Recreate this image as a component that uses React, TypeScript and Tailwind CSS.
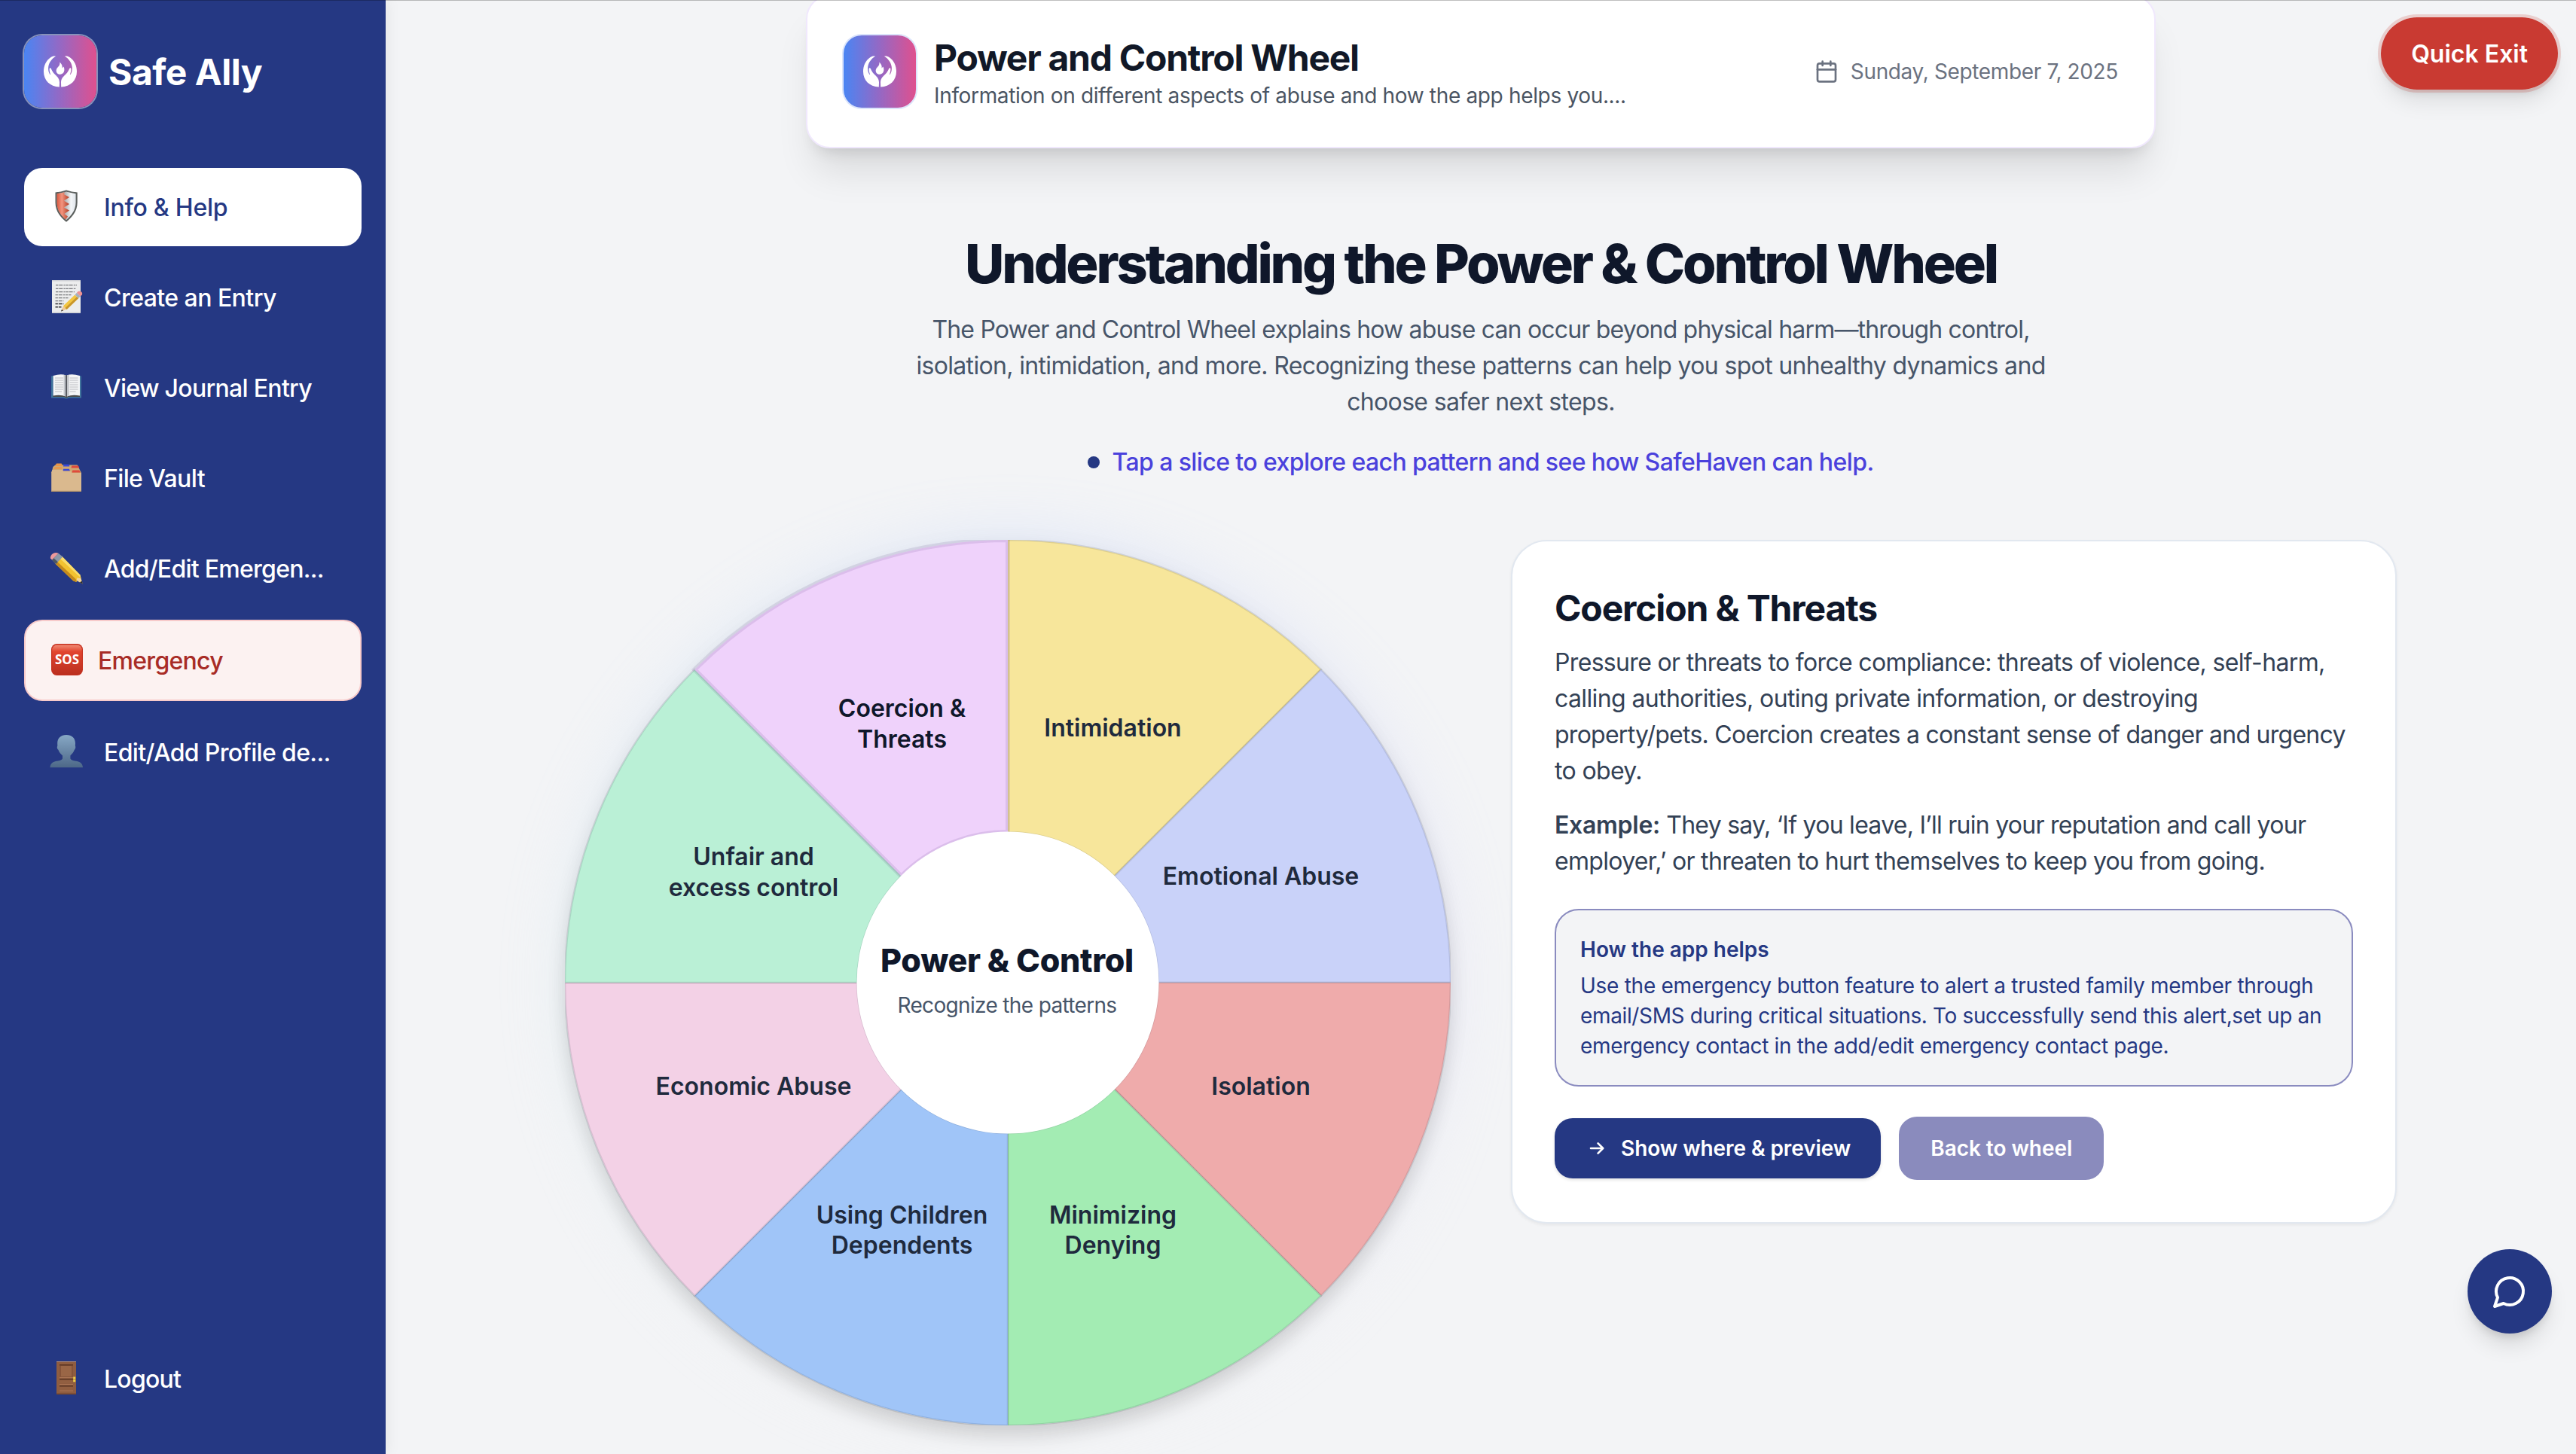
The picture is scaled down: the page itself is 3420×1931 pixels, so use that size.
import React from "react";

/* ---------- Icons ---------- */

const HAND =
  "M18 3.8C16 2.9 13.6 3.5 11.2 5.2C5.2 9.4 2 16.2 2 24C2 35.6 10.2 44 22.8 44.5L23 38.4C23 33 19.2 30.2 16.6 27.6C14.2 25.2 12.8 22.2 11.9 20.2C11.1 18.6 9.5 19 9.6 21C9.7 24 10.3 26 11.2 27.8L10.4 28C8.4 25.2 7.8 21.2 8.2 18C9 11.8 13 6.8 18 3.8Z";

function HandsMark() {
  return (
    <svg viewBox="0 0 48 48" className="size-12" fill="#fff">
      <path d={HAND} />
      <path d={HAND} transform="translate(48 0) scale(-1 1)" />
      <path d="M23.4 11.6C25.6 14 27.2 16 26.6 19.4L28.4 17.6C30.6 21.6 29.2 27.7 24.2 27.7C19.6 27.7 17.6 23.8 19.2 20.4C20.4 18.2 24 16.6 23.4 11.6Z" />
    </svg>
  );
}

function LogoTile({ ring }: { ring: string }) {
  return (
    <div
      className={`flex size-24 shrink-0 items-center justify-center rounded-[24px] bg-[linear-gradient(90deg,#4a85f3_0%,#9568c4_50%,#df508e_100%)] ring-2 ${ring}`}
    >
      <HandsMark />
    </div>
  );
}

function ShieldIcon() {
  return (
    <svg viewBox="0 0 48 48" className="size-12">
      <defs>
        <linearGradient id="shR" x1="0" x2="1">
          <stop offset="0" stopColor="#d9583f" />
          <stop offset=".4" stopColor="#f2957f" />
          <stop offset="1" stopColor="#b23a22" />
        </linearGradient>
        <linearGradient id="shW" x1="0" x2="1">
          <stop offset="0" stopColor="#b9bcbd" />
          <stop offset=".45" stopColor="#b4b6b7" />
          <stop offset=".75" stopColor="#f4f6f8" />
          <stop offset="1" stopColor="#dfe4ea" />
        </linearGradient>
      </defs>
      <path d="M9.5 4.5Q17 3.6 24 1.4Q31 3.6 38.7 4.5V18C38.7 30 31 38 24 43.8C17 38 9.5 30 9.5 18Z" fill="#5b5f5d" />
      <path d="M11.6 6.3Q18 5.4 24 3.6Q30 5.4 36.6 6.3V18C36.6 28.6 30 36 24 41.2C18 36 11.6 28.6 11.6 18Z" fill="url(#shW)" />
      <path d="M11.6 6.3Q18 5.4 22 4.2L21 7L28 11L21 15.5L28 20L21 24.5L28 28.5L21.5 33L26 36.5L23 40.4C17.5 35.6 11.6 28.6 11.6 18Z" fill="url(#shR)" />
    </svg>
  );
}

function MemoIcon() {
  return (
    <svg viewBox="0 0 48 48" className="size-12">
      <rect x="5" y="1.2" width="38" height="43.6" fill="#eceded" />
      <path d="M5 1.2h38v1.2H5zM5 43.6h38v1.2H5z" fill="#cfd1d3" />
      <g stroke="#77797c" strokeWidth="1.1" fill="none" strokeDasharray="3.4 .9 5 1.2 2 .8">
        <path d="M10 7.6h28M10 12.4h27M10 16.6h25M9.5 20.6h21M9.5 24.6h18M9.5 28.6h11" />
        <path d="M9.5 32.6h11M9.5 36.8h8" stroke="#2d2e30" strokeWidth="1.5" />
      </g>
      <path d="M17 42.6L20 35.2L24.6 39.8Z" fill="#edc897" />
      <path d="M17 42.6L18 40L20 41.6Z" fill="#333" />
      <path d="M20 35.2L35.4 20.4L40.2 25L24.6 40Z" fill="#f3c641" />
      <path d="M22.6 38L38 23.2L40.2 25L24.6 40Z" fill="#c8952a" />
      <path d="M35.4 20.4L38 17.8L42.8 22.4L40.2 25Z" fill="#a7b2bd" />
      <path d="M38 17.8C39.8 13.8 46.8 16 44.8 20.4L42.8 22.4Z" fill="#ee9292" />
    </svg>
  );
}

function BookIcon() {
  return (
    <svg viewBox="0 0 48 48" className="size-12">
      <path d="M4 8.6L6.6 8V34.6H42V8L44 8.6V37.6H27.6Q24 39.4 20.4 37.6H4Z" fill="#3f739b" />
      <path d="M6.4 34H42V36H27L24 37.4L21 36H6.4Z" fill="#4b4c4a" />
      <path d="M6.6 8Q17 4.8 23.4 7.4V35.4Q16 32.8 6.6 34.6Z" fill="#f4f5f6" />
      <path d="M42 8Q31.4 4.8 24.8 7.4V35.4Q32.4 32.8 42 34.6Z" fill="#f4f5f6" />
      <path d="M20.6 6.8L23.4 7.4V35.4L20.6 34.4Z" fill="#c3c6ca" />
      <path d="M27.6 6.8L24.8 7.4V35.4L27.6 34.4Z" fill="#c3c6ca" />
      <path d="M23.2 7.2h1.8V35.6h-1.8z" fill="#55585c" />
      <g stroke="#b4b7bb" strokeWidth=".9">
        <path d="M9 11h11M9 14h11M9 17h11M9 20h11M9 23h11M9 26h11M9 29h9M28.6 11h11M28.6 14h11M28.6 17h11M28.6 20h11M28.6 23h11M28.6 26h11M28.6 29h8" />
      </g>
    </svg>
  );
}

function DividersIcon() {
  return (
    <svg viewBox="0 0 48 48" className="size-12">
      <path d="M6.4 9L9.4 6.4H38.6L44 17H4.4Z" fill="#cfa873" />
      <path d="M10 6.2L11 4.4H17.6L18.6 6.6V8H9.2Z" fill="#ea9648" />
      <path d="M20 7.6L20.8 5.8H27.2L28.2 7.6V8.4H20Z" fill="#3b49d8" />
      <path d="M30.6 9.8L31.4 7.6H40L41.4 10.4H30.6Z" fill="#e04a3c" />
      <path d="M7.4 12L8.6 9.2H17.4L18.6 11.8H7.4Z" fill="#ea9648" />
      <path d="M19.4 14.2L20.2 11.8H27.8L29 14.2Z" fill="#3b49d8" />
      <path d="M31.4 16.4L32.4 13.6H41.4L42.6 16.4Z" fill="#e04a3c" />
      <path d="M4.2 16.6L5.4 13H19L20 15H30.4L31.4 17H44V41.8H4.2Z" fill="#dab98e" />
      <path d="M4.2 40.8H44V42H4.2Z" fill="#b8966a" />
    </svg>
  );
}

function PencilIcon() {
  return (
    <svg viewBox="0 0 48 48" className="size-12">
      <path d="M38.5 40.5L45.8 44.4L43.4 36.6L36 31L31.8 36Z" fill="#f2d49a" />
      <path d="M42 42.4L45.9 44.5L44.6 40.4Z" fill="#2b2b2b" />
      <path d="M9.4 17.6L18 7.6L42.4 32.4L43.6 37L38.2 36.6L37.6 42L33.4 40.6Z" fill="#f2c230" />
      <path d="M9.4 17.6L11.8 14.8L36.6 38L37.6 42L33.4 40.6Z" fill="#c58a1c" />
      <path d="M15.4 10.6L18 7.6L42.4 32.4L43.4 36.6Z" fill="#f9dc6c" />
      <path d="M5 12.6L13.6 3.8L19.2 8.6L10.2 18Z" fill="#8b98a8" />
      <path d="M5 12.6L7.4 10.2L12.8 15.2L10.2 18Z" fill="#4c5661" />
      <path d="M3 10.6C2 6.4 8 .6 13.6 3.8L5 12.6Z" fill="#ee9a9c" />
    </svg>
  );
}

function SosIcon() {
  return (
    <svg viewBox="0 0 48 48" className="size-12">
      <defs>
        <linearGradient id="sos" x1="0" x2="0" y1="0" y2="1">
          <stop offset="0" stopColor="#f08a74" />
          <stop offset=".22" stopColor="#e2452f" />
          <stop offset="1" stopColor="#bb2f1f" />
        </linearGradient>
      </defs>
      <rect x="4" y="2" width="42" height="42" rx="7.5" fill="#c6301f" />
      <rect x="5.2" y="3.6" width="39.6" height="39.4" rx="6.4" fill="url(#sos)" />
      <text
        x="25"
        y="29.4"
        textAnchor="middle"
        textLength="32"
        lengthAdjust="spacingAndGlyphs"
        fontSize="17.5"
        className="fill-white font-['Open_Sans',sans-serif] font-bold"
      >
        SOS
      </text>
    </svg>
  );
}

function PersonIcon() {
  return (
    <svg viewBox="0 0 48 48" className="size-12">
      <defs>
        <linearGradient id="bust" x1="0" x2="0" y1="0" y2="1">
          <stop offset="0" stopColor="#87a8c5" />
          <stop offset="1" stopColor="#4d6888" />
        </linearGradient>
      </defs>
      <path
        d="M24 1C31.4 1 36 5.4 36 12C36 13.6 35.8 14.8 36 16C36.8 17.4 35.8 20 34.8 20.8C34 24 31 27 29.4 28.4V32.6C31 35.6 36 35.4 40 36.6C44 37.8 45.6 40.4 46 44.2H2.4C2.8 40.4 4.4 37.8 8.4 36.6C12.4 35.4 17.4 35.6 19 32.6V28.4C17.2 27 14.2 24 13.4 20.8C12.2 20 11.2 17.4 12.2 16C12.4 14.8 12.2 13.6 12.2 12C12.2 5.4 16.8 1 24 1Z"
        fill="url(#bust)"
      />
    </svg>
  );
}

function DoorIcon() {
  return (
    <svg viewBox="0 0 48 48" className="size-12">
      <rect x="11" y="1" width="26" height="43.8" fill="#8f5d40" />
      <path d="M11 1h26v1H11z" fill="#b98f76" />
      <path d="M11 43.6h26v1.2H11z" fill="#6f422b" />
      <path d="M15 5h18v17H15z" fill="#86543a" />
      <path d="M17 7h14v14H17z" fill="#9a6646" />
      <path d="M15 5h18v1.6H15zM15 24h18v1.6H15zM15 33h18v1.6H15z" fill="#5b3523" />
      <path d="M15 22h18v1H15zM15 31h18v1H15zM15 39.6h18v1H15z" fill="#ab7453" />
      <path d="M16 26h16v4.6H16zM16 35h16v4H16z" fill="#925f41" />
      <path d="M33.2 21.4h3v3h-3zM33.2 25.2h3v3h-3z" fill="#ecd04a" />
    </svg>
  );
}

function CalendarIcon() {
  return (
    <svg viewBox="0 0 24 24" className="size-8 text-[#6b7280]" fill="none" stroke="currentColor" strokeWidth="2" strokeLinecap="round" strokeLinejoin="round">
      <path d="M8 2v4M16 2v4" />
      <rect x="3" y="4" width="18" height="18" rx="2" />
      <path d="M3 10h18" />
    </svg>
  );
}

/* ---------- Sidebar ---------- */

type Item = {
  label: string;
  icon: () => React.ReactElement;
  tracking: string;
  active?: boolean;
};

const TOP_ITEMS: Item[] = [
  { label: "Info & Help", icon: ShieldIcon, tracking: "tracking-[-0.25px]", active: true },
  { label: "Create an Entry", icon: MemoIcon, tracking: "tracking-[-0.55px]" },
  { label: "View Journal Entry", icon: BookIcon, tracking: "tracking-[-0.7px]" },
  { label: "File Vault", icon: DividersIcon, tracking: "tracking-[-0.62px]" },
  { label: "Add/Edit Emergen...", icon: PencilIcon, tracking: "tracking-[-0.74px]" },
];

function NavItem({ label, icon: Icon, tracking, active }: Item) {
  return (
    <div
      className={`flex h-[104px] shrink-0 items-center gap-[26px] rounded-[24px] pl-8 text-[32px] font-medium ${
        active ? "bg-white text-[#253883]" : "text-white"
      }`}
    >
      <Icon />
      <span className={`pt-0.5 whitespace-nowrap ${tracking}`}>{label}</span>
    </div>
  );
}

function Sidebar() {
  return (
    <aside className="relative z-10 flex w-[512px] shrink-0 flex-col bg-[#253883] px-8 pt-[47px] pb-12 shadow-[0_0_20px_rgba(0,0,0,0.08)]">
      <div className="flex items-center gap-4">
        <LogoTile ring="ring-white/45" />
        <span className="pt-0.5 text-[48px] font-bold tracking-[-0.5px] text-white">Safe Ally</span>
      </div>
      <nav className="mt-20 flex grow flex-col gap-4">
        {TOP_ITEMS.map((item) => (
          <NavItem key={item.label} {...item} />
        ))}
        <div className="flex h-[108px] shrink-0 items-center gap-[18px] rounded-[24px] border-2 border-[#f7caca] bg-[#fcf2f1] pl-[30px] text-[32px] font-medium text-[#a82c26]">
          <SosIcon />
          <span className="pt-0.5 tracking-[-0.72px]">Emergency</span>
        </div>
        <NavItem label="Edit/Add Profile de..." icon={PersonIcon} tracking="tracking-[-0.64px]" />
      </nav>
      <NavItem label="Logout" icon={DoorIcon} tracking="tracking-[-0.75px]" />
    </aside>
  );
}

/* ---------- Wheel ---------- */

type Slice = { fill: string; lines: [string, number][]; x: number };

// Clockwise from twelve o'clock; each line carries its baseline.
const SLICES: Slice[] = [
  { fill: "#f7e69b", x: 727.5, lines: [["Intimidation", 260.5]] },
  { fill: "#c9d2f9", x: 924, lines: [["Emotional Abuse", 458]] },
  { fill: "#efabab", x: 924, lines: [["Isolation", 737]] },
  { fill: "#a3ecb3", x: 727.5, lines: [["Minimizing", 907.5], ["Denying", 948]] },
  { fill: "#a0c5f8", x: 447.5, lines: [["Using Children", 907.5], ["Dependents", 948]] },
  { fill: "#f3d1e6", x: 250.5, lines: [["Economic Abuse", 737]] },
  { fill: "#baf0d6", x: 250.5, lines: [["Unfair and", 432], ["excess control", 473]] },
  { fill: "#efd2fb", x: 447.5, lines: [["Coercion &", 235], ["Threats", 275.5]] },
];

function slicePath(i: number) {
  const point = (r: number, deg: number) => {
    const a = ((deg - 90) * Math.PI) / 180;
    return `${(588 + r * Math.cos(a)).toFixed(2)} ${(588 + r * Math.sin(a)).toFixed(2)}`;
  };
  const from = i * 45;
  const to = from + 45;
  return `M${point(200, from)}L${point(588, from)}A588 588 0 0 1 ${point(588, to)}L${point(200, to)}A200 200 0 0 0 ${point(200, from)}Z`;
}

function Wheel() {
  return (
    <div className="relative size-[1176px]">
      <div className="absolute -inset-2 rounded-full bg-[conic-gradient(#a8c0fa,#d0cdf2_90deg,#e5e7eb_150deg,#e5e7eb_210deg,#c6e2ea_270deg,#a8c0fa)] opacity-25 blur-[40px]" />
      <div className="absolute inset-0 rounded-full shadow-[0_16px_26px_-2px_rgba(0,0,0,0.13),0_6px_36px_rgba(0,0,0,0.04)]" />
      <svg viewBox="0 0 1176 1176" className="relative size-full">
        {SLICES.map((s, i) => {
          const selected = i === SLICES.length - 1;
          return (
            <path
              key={s.fill}
              d={slicePath(i)}
              fill={s.fill}
              stroke={selected ? "rgba(60,30,110,0.11)" : "rgba(30,41,59,0.12)"}
              strokeWidth={selected ? 6 : 2.5}
            />
          );
        })}
        <circle cx="588" cy="588" r="200.5" fill="#fff" />
        {SLICES.map((s, i) =>
          s.lines.map(([text, y]) => (
            <text
              key={text}
              x={s.x}
              y={y}
              textAnchor="middle"
              fontSize="32"
              className={`font-semibold ${i === SLICES.length - 1 ? "fill-[#0f172a]" : "fill-[#1f2a3d]"}`}
            >
              {text}
            </text>
          ))
        )}
        <text x="587" y="573.5" textAnchor="middle" fontSize="43" className="fill-[#0f172a] font-extrabold tracking-[-0.3px]">
          Power &amp; Control
        </text>
        <text x="587" y="628" textAnchor="middle" fontSize="28" className="fill-[#475569] tracking-[-0.66px]">
          Recognize the patterns
        </text>
      </svg>
    </div>
  );
}

/* ---------- Detail card ---------- */

function DetailCard() {
  return (
    <section className="flex flex-col rounded-[48px] border-2 border-[#e2e8f0] bg-white px-14 pt-[57px] pb-14 text-[32px] leading-[48px] whitespace-nowrap text-[#334155] shadow-[0_2px_4px_rgba(0,0,0,0.06)]">
      <h2 className="text-[48px] leading-[64px] font-bold tracking-[-1.16px] text-[#0f172a]">Coercion &amp; Threats</h2>
      <p className="mt-4 flex flex-col">
        <span className="tracking-[-0.66px]">Pressure or threats to force compliance: threats of violence, self-harm,</span>
        <span className="tracking-[-0.62px]">calling authorities, outing private information, or destroying</span>
        <span className="tracking-[-0.74px]">property/pets. Coercion creates a constant sense of danger and urgency</span>
        <span className="tracking-[-0.65px]">to obey.</span>
      </p>
      <p className="mt-6 flex flex-col">
        <span className="tracking-[-0.73px]">
          <strong className="font-semibold tracking-[-0.28px]">Example:</strong> They say, ‘If you leave, I’ll ruin your reputation and call your
        </span>
        <span className="tracking-[-0.68px]">employer,’ or threaten to hurt themselves to keep you from going.</span>
      </p>
      <div className="mt-[39px] flex flex-col rounded-[32px] border-2 border-[#8a8bbf] bg-[#f3f4f6] p-8 text-[28px] leading-[40px] text-[#253883]">
        <h3 className="font-semibold">How the app helps</h3>
        <p className="mt-2 flex flex-col">
          <span className="tracking-[-0.27px]">Use the emergency button feature to alert a trusted family member through</span>
          <span className="tracking-[-0.36px]">email/SMS during critical situations. To successfully send this alert,set up an</span>
          <span className="tracking-[-0.34px]">emergency contact in the add/edit emergency contact page.</span>
        </p>
      </div>
      <div className="mt-10 flex items-center gap-6 text-[28px] leading-[40px] font-semibold text-white">
        <button className="flex h-20 items-center gap-4 rounded-[24px] bg-[#253883] px-10 tracking-[-0.08px] shadow-[0_2px_4px_rgba(0,0,0,0.12)]">
          <svg viewBox="0 0 32 32" className="size-8" fill="none" stroke="currentColor" strokeWidth="2.6" strokeLinecap="round" strokeLinejoin="round">
            <path d="M8 16h16M17.6 9.4L24.2 16L17.6 22.6" />
          </svg>
          Show where &amp; preview
        </button>
        <button className="h-[84px] rounded-[24px] border-2 border-[#8a8bbd] bg-[#8a8bbd] px-10 tracking-[-0.05px]">
          Back to wheel
        </button>
      </div>
    </section>
  );
}

/* ---------- Page ---------- */

function PageHeader() {
  return (
    <header className="-mt-[7px] flex h-[204px] w-[1792px] shrink-0 items-center justify-between rounded-[32px] border-2 border-[#f0e8fd] bg-white px-12 shadow-[0_40px_50px_-10px_rgba(0,0,0,0.1),0_16px_20px_-12px_rgba(0,0,0,0.12)]">
      <div className="flex items-center gap-6">
        <LogoTile ring="ring-[#dbe4fb]" />
        <div>
          <h1 className="pt-[3px] text-[48px] leading-[61px] font-bold tracking-[-1.27px] text-[#111827]">
            Power and Control Wheel
          </h1>
          <p className="text-[28px] leading-[40px] tracking-[-0.34px] text-[#4b5563]">
            Information on different aspects of abuse and how the app helps you....
          </p>
        </div>
      </div>
      <div className="flex items-center gap-4 text-[28px] leading-[40px] tracking-[-0.36px] text-[#6b7280]">
        <CalendarIcon />
        Sunday, September 7, 2025
      </div>
    </header>
  );
}

export default function App() {
  return (
    <div className="relative flex h-[1931px] w-[3420px] overflow-hidden bg-[#f3f4f6] font-['Inter',sans-serif]">
      <Sidebar />
      <main className="flex grow flex-col items-center">
        <PageHeader />
        <h2 className="mt-[113px] text-[72px] leading-[80px] font-extrabold tracking-[-3.22px] whitespace-nowrap text-[#0f172a]">
          Understanding the Power &amp; Control Wheel
        </h2>
        <p className="mt-6 flex flex-col items-center text-[32px] leading-[48px] whitespace-nowrap text-[#475569]">
          <span className="tracking-[-0.82px]">
            The Power and Control Wheel explains how abuse can occur beyond physical harm—through control,
          </span>
          <span className="tracking-[-0.66px]">
            isolation, intimidation, and more. Recognizing these patterns can help you spot unhealthy dynamics and
          </span>
          <span className="tracking-[-0.66px]">choose safer next steps.</span>
        </p>
        <p className="mt-8 flex items-center gap-4 text-[32px] leading-[48px] font-medium tracking-[-0.59px] text-[#4a41dc]">
          <span className="size-4 rounded-full bg-[#253883]" />
          Tap a slice to explore each pattern and see how SafeHaven can help.
        </p>
        <div className="mt-[79px] grid w-[2432px] grid-cols-2 items-start gap-20">
          <Wheel />
          <DetailCard />
        </div>
      </main>

      <button className="absolute top-[23px] right-6 h-24 rounded-full bg-[#c93a32] px-10 pt-0.5 text-[32px] font-semibold text-white shadow-[0_20px_30px_-6px_rgba(0,0,0,0.1),0_8px_12px_-4px_rgba(0,0,0,0.1)] outline-4 outline-[#c93a32]/20">
        Quick Exit
      </button>
      <button className="absolute right-8 bottom-40 flex size-28 items-center justify-center rounded-full bg-[#253883] text-white shadow-[0_20px_30px_-6px_rgba(0,0,0,0.12),0_8px_12px_-4px_rgba(0,0,0,0.12)]">
        <svg viewBox="0 0 24 24" className="size-12" fill="none" stroke="currentColor" strokeWidth="2" strokeLinecap="round" strokeLinejoin="round">
          <path d="M7.9 20A9 9 0 1 0 4 16.1L2 22Z" />
        </svg>
      </button>
      <div className="absolute inset-x-0 top-0 z-20 h-px bg-black/25" />
    </div>
  );
}
